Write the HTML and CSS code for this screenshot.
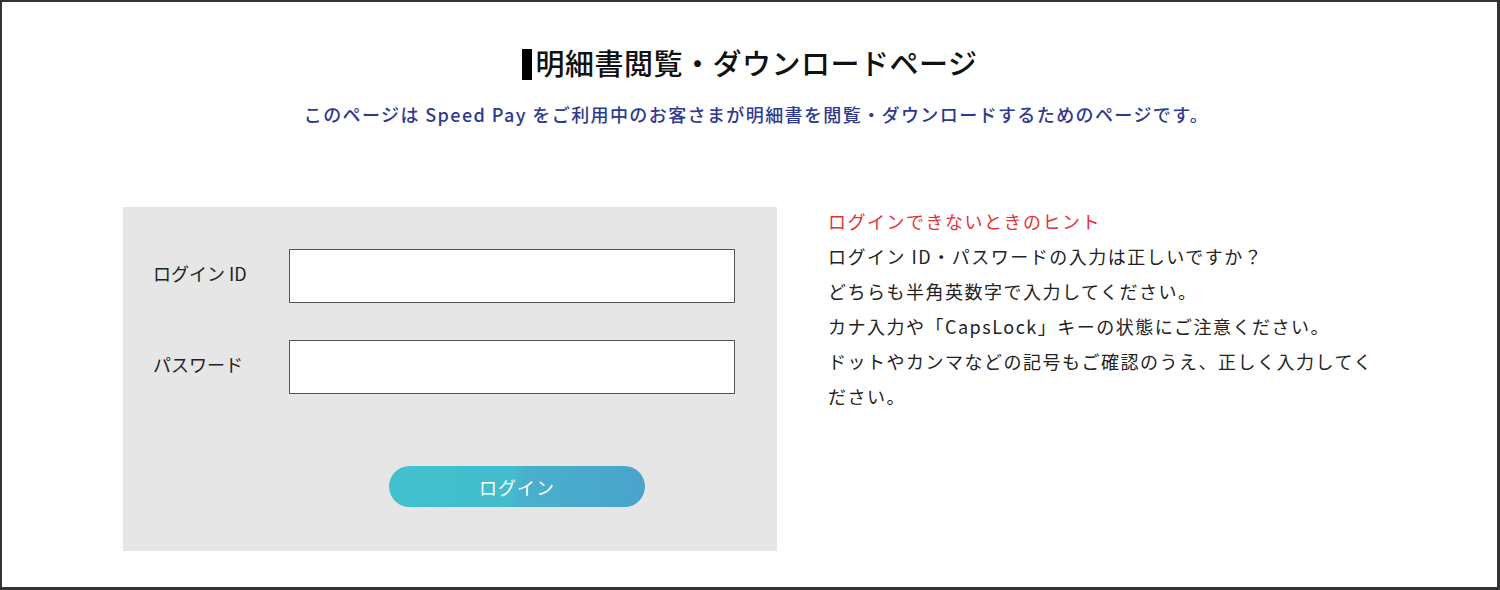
FILE: index.html
```html
<!DOCTYPE html>
<html lang="ja">
<head>
  <meta charset="UTF-8" />
  <title>明細書閲覧・ダウンロードページ</title>
  <link rel="stylesheet" href="styles.css">
</head>
<body>
  <div class="page">
    <h1 class="title">明細書閲覧・ダウンロードページ</h1>
    <p class="lead">このページは Speed Pay をご利用中のお客さまが明細書を閲覧・ダウンロードするためのページです。</p>

    <div class="main">
      <form class="login-box" onsubmit="return false">
        <div class="row">
          <label for="loginId">ログイン ID</label>
          <input id="loginId" type="text" />
        </div>
        <div class="row">
          <label for="password">パスワード</label>
          <input id="password" type="password" />
        </div>
        <div class="actions">
          <button type="submit" class="login-btn">ログイン</button>
        </div>
      </form>

      <div class="hint">
        <p class="hint-title">ログインできないときのヒント</p>
        <p>ログイン ID・パスワードの入力は正しいですか？<br>
        どちらも半角英数字で入力してください。<br>
        カナ入力や「CapsLock」キーの状態にご注意ください。<br>
        ドットやカンマなどの記号もご確認のうえ、正しく入力してください。</p>
      </div>
    </div>
  </div>
</body>
</html>
```

FILE: styles.css
```css
html, body { margin: 0; padding: 0; }
body { font-family: "Noto Sans CJK JP", "Noto Sans", sans-serif; color: #222; background: #fff; }
.page { width: 1500px; height: 590px; box-sizing: border-box; border: 2px solid #333; border-width: 2px 3px 3px 2px; }

.title { margin: 0; padding-top: 39px; text-align: center; font-size: 29px; font-weight: 500; line-height: 42px; color: #111; letter-spacing: 0.5px; }
.title::before { content: ""; display: inline-block; width: 10px; height: 31px; background: #000; margin-right: 4px; vertical-align: -5px; }
.lead { margin: 18px 0 0; padding-left: 14px; text-align: center; font-size: 18px; line-height: 26px; color: #2e3a8f; font-weight: 500; letter-spacing: 1.4px; }

.main { display: flex; gap: 51px; margin-top: 80px; padding-left: 121px; }

.login-box { width: 654px; height: 344px; box-sizing: border-box; background: #e6e6e6; padding: 42px 42px 0 30px; }
.row { display: flex; align-items: center; margin-bottom: 37px; }
.row label { width: 136px; font-size: 18px; color: #222; padding-bottom: 6px; }
.row input { width: 446px; height: 54px; box-sizing: border-box; border: 1px solid #555; background: #fff; margin: 0; font-size: 18px; padding: 0 10px; }
.actions { padding-left: 236px; margin-top: 72px; }
.login-btn { width: 256px; height: 41px; border: none; border-radius: 21px; color: #fff; font-family: inherit; font-size: 18px; letter-spacing: 1px; cursor: pointer;
  background: linear-gradient(100deg, #42c1cd 0%, #43bccd 48%, #48b0cd 52%, #4aa3cb 100%); }

.hint { width: 560px; font-size: 18px; line-height: 35px; color: #222; margin-top: -3px; letter-spacing: 1.5px; }
.hint p { margin: 0; }
.hint-title { color: #e8303a; }
```
